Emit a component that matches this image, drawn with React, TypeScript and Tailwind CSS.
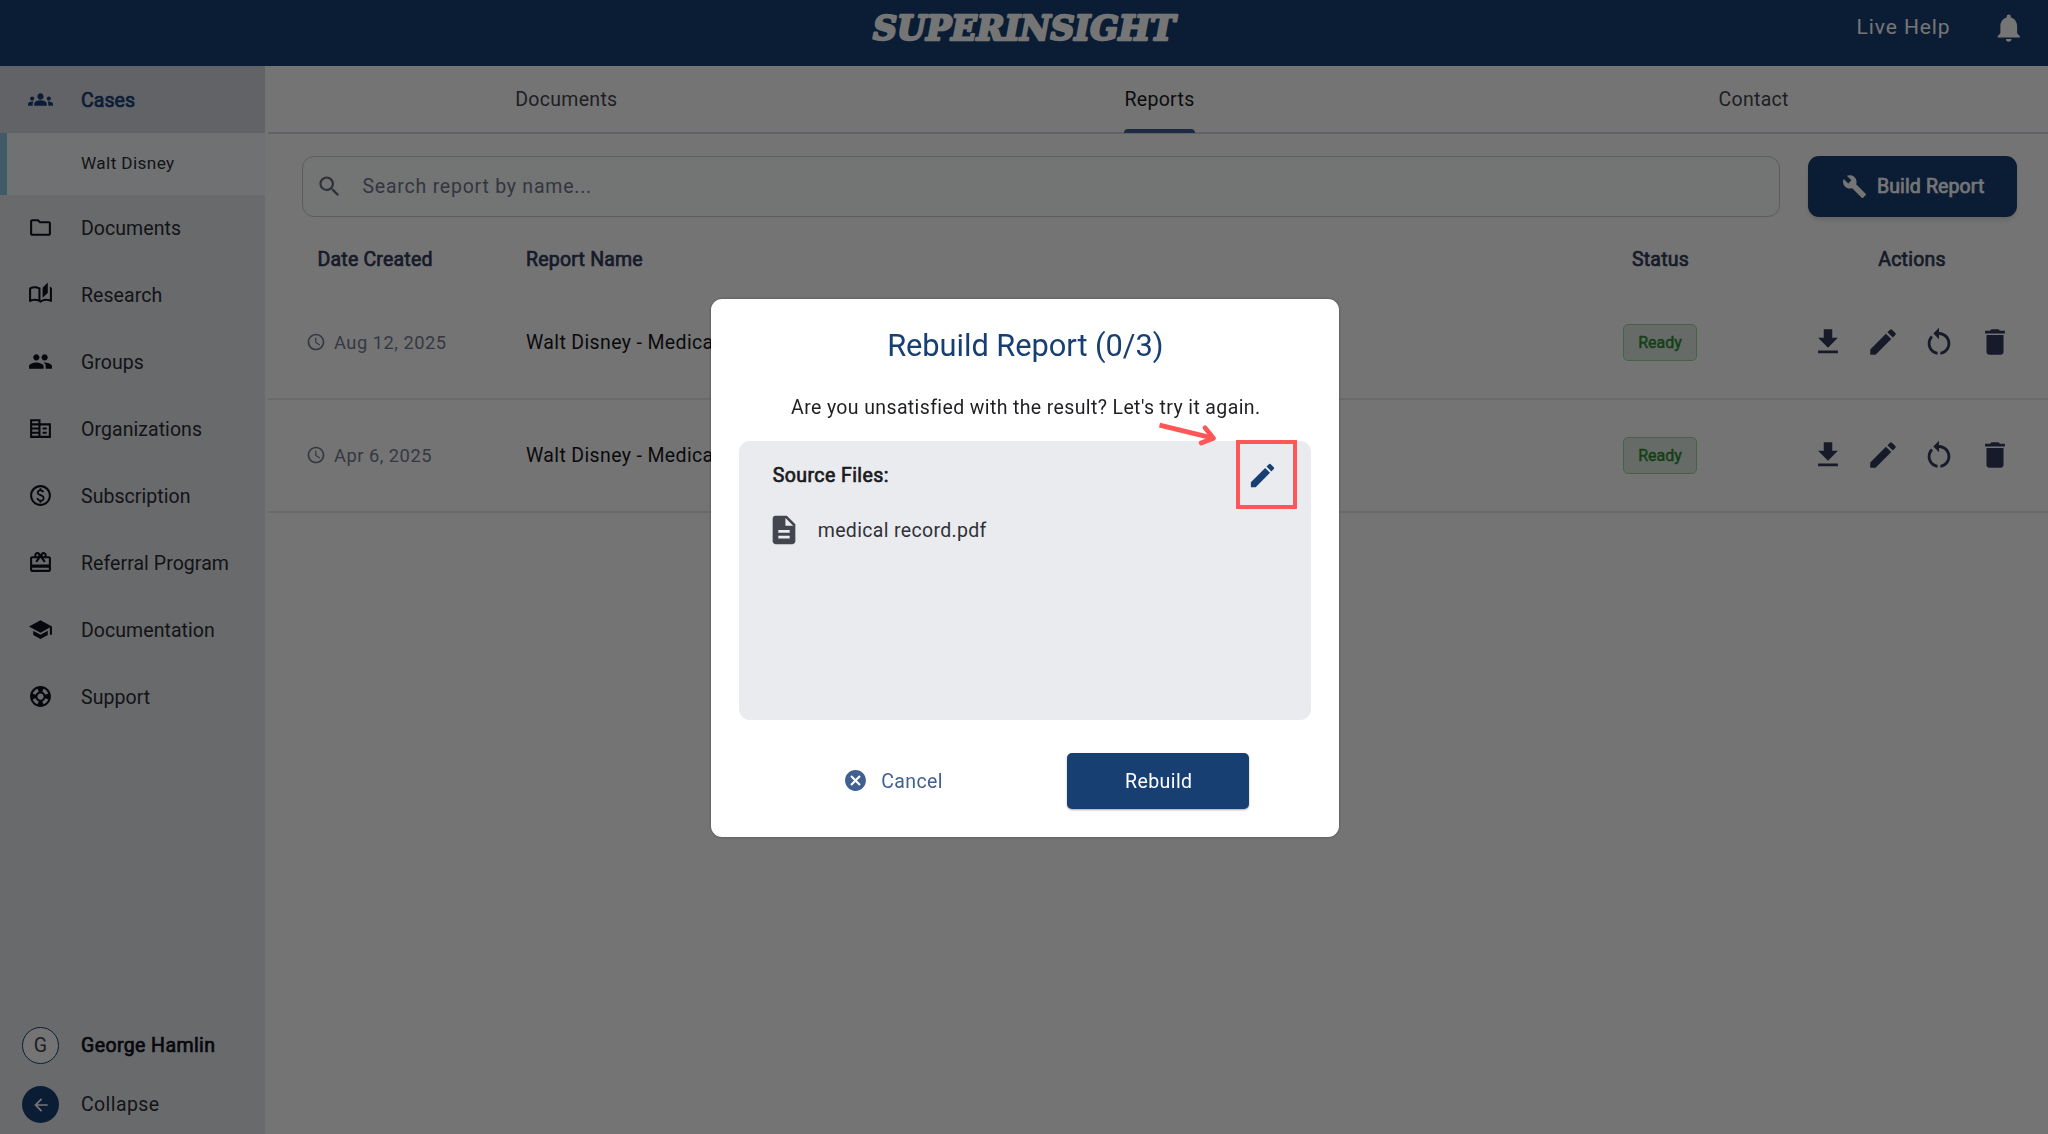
import React from "react";
import {
  MdArrowBack,
  MdBuild,
  MdCancel,
  MdCardGiftcard,
  MdDelete,
  MdDescription,
  MdDownload,
  MdEdit,
  MdGroup,
  MdGroups,
  MdNotifications,
  MdOutlineAccessTime,
  MdOutlineFolder,
  MdRestartAlt,
  MdSchool,
  MdSearch,
} from "react-icons/md";

function Glyph({ d }: { d: string }) {
  return (
    <svg viewBox="0 0 24 24" className="h-[25px] w-[25px]" fill="currentColor">
      <path d={d} />
    </svg>
  );
}

const BookIcon = () => (
  <Glyph d="M22.47 5.2c-.47-.24-.96-.44-1.47-.61v12.03c-1.14-.41-2.31-.62-3.5-.62-1.9 0-3.78.54-5.5 1.58V5.48C10.38 4.55 8.51 4 6.5 4c-1.79 0-3.48.44-4.97 1.2-.33.16-.53.51-.53.88v12.08c0 .58.47.99 1 .99.16 0 .32-.04.48-.12C3.69 18.4 5.05 18 6.5 18c2.07 0 3.98.82 5.5 2 1.52-1.18 3.43-2 5.5-2 1.45 0 2.81.4 4.02 1.04.16.08.32.12.48.12.52 0 1-.41 1-.99V6.08c0-.37-.2-.72-.53-.88zM10 16.62C8.86 16.21 7.69 16 6.5 16s-2.36.21-3.5.62V6.71C4.11 6.24 5.28 6 6.5 6c1.2 0 2.39.25 3.5.72v9.9zM19 .5l-5 5V15l5-4.5V.5z" />
);

const OfficeIcon = () => (
  <Glyph d="M12 7V3H2v18h20V7H12zM10 19H4v-2h6v2zm0-4H4v-2h6v2zm0-4H4V9h6v2zm0-4H4V5h6v2zm10 12h-8V9h8v10zm-2-8h-4v2h4v-2zm0 4h-4v2h4v-2z" />
);

const CoinIcon = () => (
  <Glyph d="M12 2C6.48 2 2 6.48 2 12s4.48 10 10 10 10-4.48 10-10S17.52 2 12 2zm0 18c-4.41 0-8-3.59-8-8s3.59-8 8-8 8 3.59 8 8-3.59 8-8 8zm.89-8.9c-1.78-.59-2.64-.96-2.64-1.9 0-1.02 1.11-1.39 1.81-1.39 1.31 0 1.79.99 1.9 1.34l1.58-.67c-.15-.44-.82-1.91-2.66-2.23V5h-1.75v1.26c-2.6.56-2.62 2.85-2.62 2.96 0 2.27 2.25 2.91 3.35 3.31 1.58.56 2.28 1.07 2.28 2.03 0 1.13-1.05 1.61-1.98 1.61-1.82 0-2.34-1.87-2.4-2.09l-1.66.67c.63 2.19 2.28 2.78 2.9 2.96V19h1.75v-1.24c.52-.09 3.02-.59 3.02-3.22.01-1.39-.6-2.61-2.88-3.44z" />
);

const LifebuoyIcon = () => (
  <Glyph d="M12 2C6.48 2 2 6.48 2 12s4.48 10 10 10 10-4.48 10-10S17.52 2 12 2zm7.46 7.12l-2.78 1.15c-.51-1.36-1.58-2.44-2.95-2.94l1.15-2.78c2.1.8 3.77 2.47 4.58 4.57zM12 15c-1.66 0-3-1.34-3-3s1.34-3 3-3 3 1.34 3 3-1.34 3-3 3zM9.13 4.54l1.17 2.78c-1.38.5-2.47 1.59-2.98 2.97L4.54 9.13c.81-2.11 2.48-3.78 4.59-4.59zM4.54 14.87l2.78-1.15c.51 1.38 1.59 2.46 2.97 2.96l-1.17 2.78c-2.1-.81-3.77-2.48-4.58-4.59zm10.34 4.59l-1.15-2.78c1.37-.51 2.45-1.59 2.95-2.97l2.78 1.17c-.81 2.1-2.48 3.77-4.58 4.58z" />
);

const NAV = [
  { label: "Documents", icon: <MdOutlineFolder size={25} /> },
  { label: "Research", icon: <BookIcon /> },
  { label: "Groups", icon: <MdGroup size={25} /> },
  { label: "Organizations", icon: <OfficeIcon /> },
  { label: "Subscription", icon: <CoinIcon /> },
  { label: "Referral Program", icon: <MdCardGiftcard size={25} /> },
  { label: "Documentation", icon: <MdSchool size={25} /> },
  { label: "Support", icon: <LifebuoyIcon /> },
];

function Header() {
  return (
    <header className="grid h-[66px] shrink-0 grid-cols-3 items-start bg-[#184174] text-white">
      <span />
      <svg className="ml-[3px] mt-[7px] h-[44px] w-[330px] justify-self-center" viewBox="0 0 330 44">
        <text
          x="13"
          y="33.3"
          textLength="302"
          lengthAdjust="spacingAndGlyphs"
          className="fill-white stroke-white font-['DejaVu_Serif'] text-[33px] font-bold italic"
          strokeWidth="2.4"
          strokeLinejoin="round"
        >
          SUPERINSIGHT
        </text>
      </svg>
      <div className="flex h-[54px] items-center justify-end gap-[41.5px] pr-[22.5px]">
        <span className="pt-px text-[21px] tracking-[0.9px]">Live Help</span>
        <MdNotifications size={33.5} className="mt-[2px]" />
      </div>
    </header>
  );
}

function Sidebar() {
  return (
    <aside className="flex w-[265px] shrink-0 flex-col bg-[#e5e7eb] text-[19.5px] tracking-[0.06px] text-[#2b2d33]">
      <div className="flex h-[67px] items-center bg-[#d5d7df] text-[#184174]">
        <span className="flex w-[81px] justify-center">
          <MdGroups size={25} />
        </span>
        <span className="pt-[2px] [-webkit-text-stroke:0.7px_currentColor]">Cases</span>
      </div>
      <div className="flex h-[61.5px] items-center border-l-[7px] border-[#8bc4e0] bg-[#f3f7fb] pl-[74px] pt-px text-[17.2px] tracking-[0.38px]">
        Walt Disney
      </div>
      {NAV.map((n) => (
        <div key={n.label} className="flex h-[66.9px] items-center">
          <span className="flex w-[81px] justify-center text-[#10131f]">{n.icon}</span>
          <span className="pt-[2px]">{n.label}</span>
        </div>
      ))}
      <div className="mt-auto flex h-[59px] items-center tracking-[0.4px] text-[#10131f]">
        <span className="flex w-[81px] justify-center">
          <span className="flex h-[37px] w-[37px] items-center justify-center rounded-full border-[1.5px] border-[#184174] bg-[#fdfdfd] text-[#44464f]">
            G
          </span>
        </span>
        <span className="[-webkit-text-stroke:0.7px_currentColor]">George Hamlin</span>
      </div>
      <div className="flex h-[59px] items-center tracking-[0.4px]">
        <span className="flex w-[81px] justify-center">
          <span className="flex h-[37px] w-[37px] items-center justify-center rounded-full bg-[#184174] text-white">
            <MdArrowBack size={20} />
          </span>
        </span>
        Collapse
      </div>
    </aside>
  );
}

function Tabs() {
  return (
    <div className="grid h-[67.5px] grid-cols-3 border-b-2 border-[#d3d6dd] pl-[2px] text-[19.5px] tracking-[0.3px] text-[#44464f]">
      <div className="flex items-center justify-center pt-px">Documents</div>
      <div className="flex justify-center pl-px text-[#1a1b20]">
        <div className="relative flex items-center pt-px">
          Reports
          <span className="absolute -bottom-[1px] left-0 h-[4px] w-full rounded-t-[4px] bg-[#415f91]" />
        </div>
      </div>
      <div className="flex items-center justify-center pl-[4px] pt-px">Contact</div>
    </div>
  );
}

function ReportRow({ date }: { date: string }) {
  return (
    <div className="flex h-[113px] items-center border-b-2 border-[#e8e8ec]">
      <div className="flex w-[258px] items-center gap-[8px] pl-[38px] text-[18.3px] tracking-[0.5px] text-[#757b92]">
        <MdOutlineAccessTime size={20} />
        <span className="pt-px">{date}</span>
      </div>
      <div className="flex-1 pt-px text-[19.5px] tracking-[0.36px] text-[#16171c]">Walt Disney - Medical Report</div>
      <div className="flex w-[186px] justify-center">
        <span className="flex h-[37px] w-[74px] items-center justify-center rounded-[5px] border-[1.5px] border-[#9ed3a2] bg-[#dfeae1] pt-px text-[16px] text-[#2f8b32] [-webkit-text-stroke:0.5px_currentColor]">
          Ready
        </span>
      </div>
      <div className="flex w-[295px] items-center gap-[21.8px] pl-[57.5px] text-[#323c5a]">
        <MdDownload size={34} />
        <MdEdit size={34} />
        <MdRestartAlt size={34} />
        <MdDelete size={34} />
      </div>
    </div>
  );
}

function Reports() {
  return (
    <main className="ml-[3px] flex-1">
      <Tabs />
      <div className="flex h-[83.5px] items-end gap-[28px] pl-[33.5px] pr-[31px]">
        <div className="flex h-[61.5px] flex-1 items-center gap-[20px] rounded-[12px] border-[1.5px] border-[#c5c9d6] bg-[#fbfcfd] pl-[13px] text-[19.5px] tracking-[0.77px] text-[#6f768d]">
          <MdSearch size={27} className="text-[#666d84]" />
          Search report by name...
        </div>
        <button className="flex h-[61.5px] w-[209.5px] items-center justify-center gap-[10px] rounded-[11px] bg-[#184174] pl-[2px] text-[19.5px] tracking-[0.12px] text-white shadow-md">
          <MdBuild size={25} />
          <span className="pt-px [-webkit-text-stroke:0.7px_currentColor]">Build Report</span>
        </button>
      </div>
      <div className="flex h-[85px] items-center pt-px text-[19.5px] tracking-[0.2px] text-[#323c5a] [-webkit-text-stroke:0.7px_currentColor]">
        <div className="w-[258px] pl-[49.5px]">Date Created</div>
        <div className="flex-1">Report Name</div>
        <div className="w-[186px] pl-px text-center">Status</div>
        <div className="w-[295px] pl-[23px] text-center">Actions</div>
      </div>
      <div className="-mt-[15.5px]">
        <ReportRow date="Aug 12, 2025" />
        <ReportRow date="Apr 6, 2025" />
      </div>
    </main>
  );
}

function RebuildDialog() {
  return (
    <div className="fixed inset-0 flex items-start justify-center bg-black/54 pl-[2.5px] pt-[298.5px]">
      <div className="flex h-[538.5px] w-[628px] flex-col rounded-[11px] bg-white px-[28px] shadow-[0_0_3px_rgba(0,0,0,0.35)]">
        <h1 className="mt-[25px] text-center text-[30.8px] leading-[44px] tracking-[-0.05px] text-[#173f72]">
          Rebuild Report (0/3)
        </h1>
        <p className="mt-[26px] pl-px text-center text-[19.5px] leading-[28px] tracking-[0.375px] text-[#1f2023]">
          Are you unsatisfied with the result? Let's try it again.
        </p>
        <section className="relative mt-[19px] h-[279px] rounded-[11px] bg-[#eaebef] px-[33px] text-[19.5px] text-[#1a1b20]">
          <div className="flex h-[70px] items-center justify-between">
            <span className="pl-[0.5px] pt-px tracking-[0.42px] [-webkit-text-stroke:0.7px_currentColor]">Source Files:</span>
            <MdEdit size={31} className="text-[#173f72]" />
          </div>
          <div className="-ml-[5.5px] mt-[4px] flex h-[31px] items-center gap-[17px] tracking-[0.33px] text-[#303138]">
            <MdDescription size={34} className="text-[#44464f]" />
            <span className="pt-px">medical record.pdf</span>
          </div>
          <span className="absolute -top-[0.5px] left-[496.5px] h-[68.5px] w-[61.5px] border-4 border-[#ff5757]" />
          <svg
            className="absolute -top-[21px] left-[416.5px] h-[30px] w-[64px]"
            viewBox="0 0 64 30"
            fill="none"
            stroke="#ff5757"
            strokeWidth="4.8"
          >
            <path d="M3.5 5.2 57 18.2" />
            <path d="M49 7.8 57.5 18.2 45.2 23" strokeLinecap="round" strokeLinejoin="round" />
          </svg>
        </section>
        <div className="mt-[33px] flex h-[56px] items-center justify-between pl-[104px] pr-[62px] text-[19.5px] tracking-[0.4px]">
          <button className="flex items-center gap-[13px] text-[#415f91]">
            <MdCancel size={25} />
            <span className="pt-[2px]">Cancel</span>
          </button>
          <button className="flex h-[56px] w-[182px] items-center justify-center rounded-[5px] bg-[#173f72] pl-px pt-[2px] text-white shadow-[0_1px_2px_rgba(0,0,0,0.35)]">
            Rebuild
          </button>
        </div>
      </div>
    </div>
  );
}

export default function App() {
  return (
    <div className="flex h-screen flex-col overflow-hidden bg-[#fdfdfd] font-['Roboto',sans-serif]">
      <Header />
      <div className="flex min-h-0 flex-1">
        <Sidebar />
        <Reports />
      </div>
      <RebuildDialog />
    </div>
  );
}
